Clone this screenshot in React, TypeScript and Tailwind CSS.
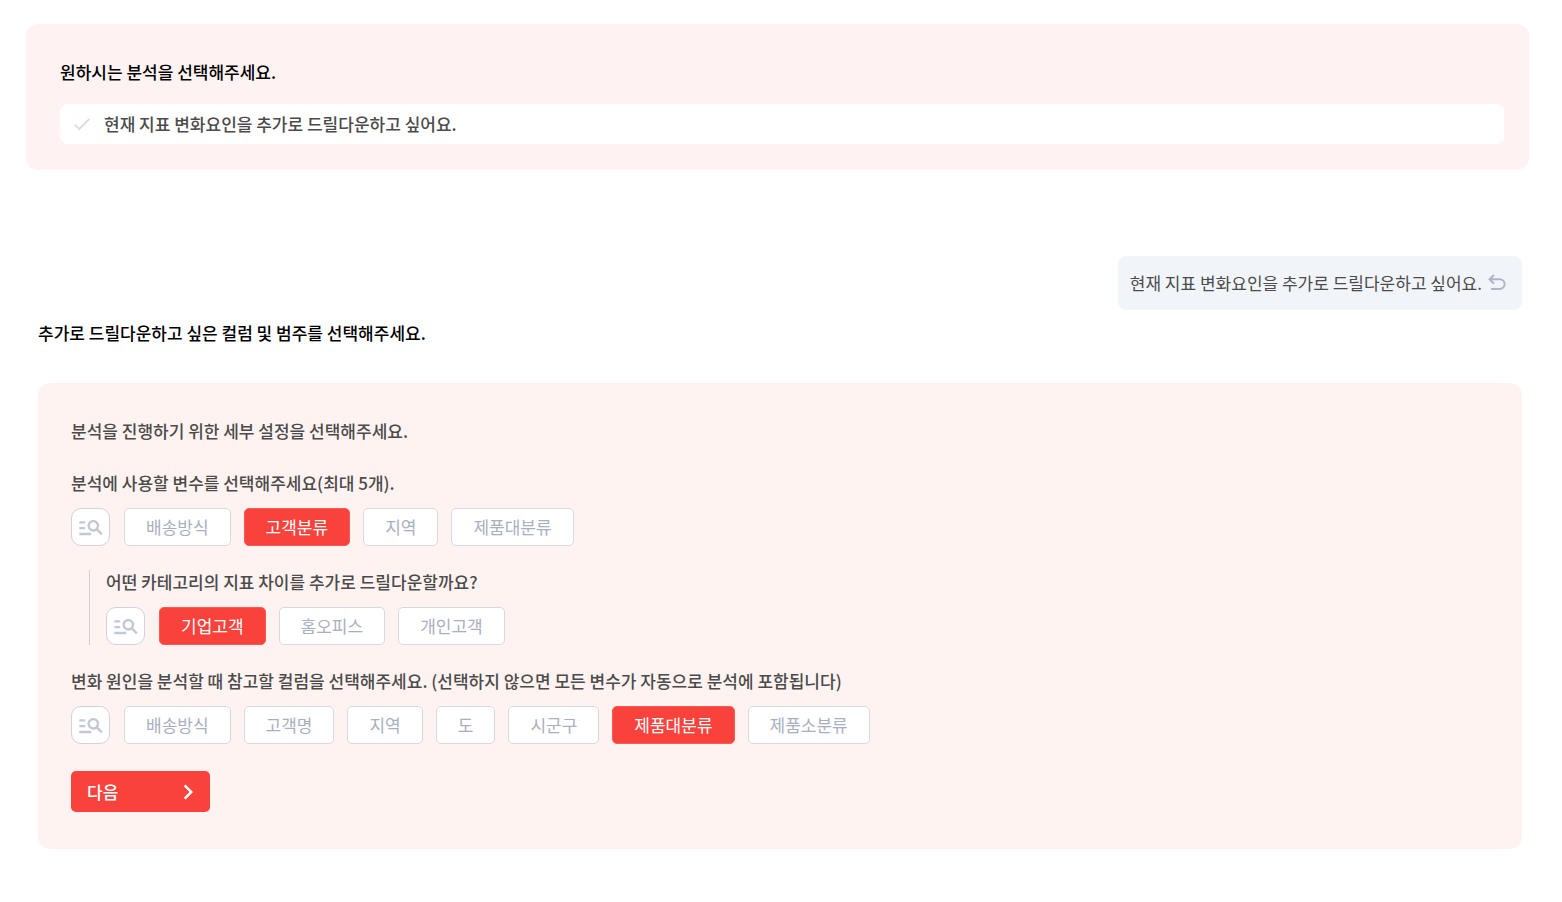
import { useState } from "react";
import { MdCheck, MdChevronRight, MdManageSearch } from "react-icons/md";

type ChipProps = { label: string; selected: boolean; onClick: () => void };

function Chip({ label, selected, onClick }: ChipProps) {
  return (
    <button
      type="button"
      aria-pressed={selected}
      onClick={onClick}
      className={
        selected
          ? "h-[38px] rounded-[5px] border border-[#fa5852] bg-[#fa423c] px-[21px] text-white"
          : "h-[38px] rounded-[5px] border border-[#d5d9e4] bg-white px-[21px] text-[#a9afbf]"
      }
    >
      {label}
    </button>
  );
}

type ChipRowProps = { name: string; options: string[]; initial: string };

function ChipRow({ name, options, initial }: ChipRowProps) {
  const [picked, setPicked] = useState<string[]>([initial]);
  const toggle = (option: string) =>
    setPicked((now) =>
      now.includes(option) ? now.filter((o) => o !== option) : [...now, option],
    );

  return (
    <div role="group" aria-label={name} className="mt-[13px] flex flex-wrap gap-[13px]">
      <button
        type="button"
        aria-label="검색"
        className="mr-px flex h-[38px] w-[39px] items-center justify-center rounded-[10px] border border-[#cdd3df] bg-white text-[#c1c8d6]"
      >
        <MdManageSearch size={28} className="shrink-0" />
      </button>
      {options.map((option) => (
        <Chip
          key={option}
          label={option}
          selected={picked.includes(option)}
          onClick={() => toggle(option)}
        />
      ))}
    </div>
  );
}

function UndoIcon() {
  return (
    <svg
      width="18"
      height="18"
      viewBox="0 0 18 18"
      fill="none"
      stroke="currentColor"
      strokeWidth="2"
      aria-hidden="true"
    >
      <path d="M6 .9 1.5 5.3 6 9.7M1.8 5.3h10a4.8 4.8 0 0 1 0 9.6H3" />
    </svg>
  );
}

export default function App() {
  return (
    <main className="bg-white pt-6 pb-[53px] font-['Noto_Sans_CJK_KR',sans-serif] text-[17px] leading-6 text-[#4b4b4b]">
      <section className="mr-[33px] ml-[26px] rounded-xl bg-[#fff2f2] pt-9 pr-[25px] pb-[26px] pl-[34px]">
        <h2 className="font-medium text-black">원하시는 분석을 선택해주세요.</h2>
        <button
          type="button"
          className="mt-5 flex h-10 w-full items-center rounded-lg bg-white pl-[11px] text-left font-medium"
        >
          <MdCheck size={22} className="mr-[11px] shrink-0 text-[#d7dfea]" />
          현재 지표 변화요인을 추가로 드릴다운하고 싶어요.
        </button>
      </section>

      <div className="mt-[86px] mr-10 ml-[38px]">
        <div className="flex justify-end">
          <div className="flex h-[54px] items-center gap-[6px] rounded-lg bg-[#f1f5f9] pr-4 pl-3">
            <p>현재 지표 변화요인을 추가로 드릴다운하고 싶어요.</p>
            <button type="button" aria-label="되돌리기" className="text-[#b0b4c6]">
              <UndoIcon />
            </button>
          </div>
        </div>

        <h2 className="mt-[11px] font-medium text-black">
          추가로 드릴다운하고 싶은 컬럼 및 범주를 선택해주세요.
        </h2>

        <section className="mt-[38px] rounded-xl bg-[#fff3f1] px-[33px] pt-9 pb-[37px]">
          <p className="font-medium">분석을 진행하기 위한 세부 설정을 선택해주세요.</p>

          <h3 className="mt-7 font-medium">분석에 사용할 변수를 선택해주세요(최대 5개).</h3>
          <ChipRow
            name="분석 변수"
            options={["배송방식", "고객분류", "지역", "제품대분류"]}
            initial="고객분류"
          />

          <div className="mt-6 ml-[18px] border-l border-[#cdd0d8] pl-4">
            <h3 className="font-medium">어떤 카테고리의 지표 차이를 추가로 드릴다운할까요?</h3>
            <ChipRow
              name="카테고리"
              options={["기업고객", "홈오피스", "개인고객"]}
              initial="기업고객"
            />
          </div>

          <h3 className="mt-6 font-medium">
            변화 원인을 분석할 때 참고할 컬럼을 선택해주세요. (선택하지 않으면 모든 변수가 자동으로 분석에 포함됩니다)
          </h3>
          <ChipRow
            name="참고 컬럼"
            options={["배송방식", "고객명", "지역", "도", "시군구", "제품대분류", "제품소분류"]}
            initial="제품대분류"
          />

          <button
            type="button"
            className="mt-[27px] flex h-[41px] w-[139px] items-center justify-between rounded-[5px] bg-[#fa423c] pr-[7px] pl-4 font-medium text-white"
          >
            다음
            <MdChevronRight size={30} />
          </button>
        </section>
      </div>
    </main>
  );
}
